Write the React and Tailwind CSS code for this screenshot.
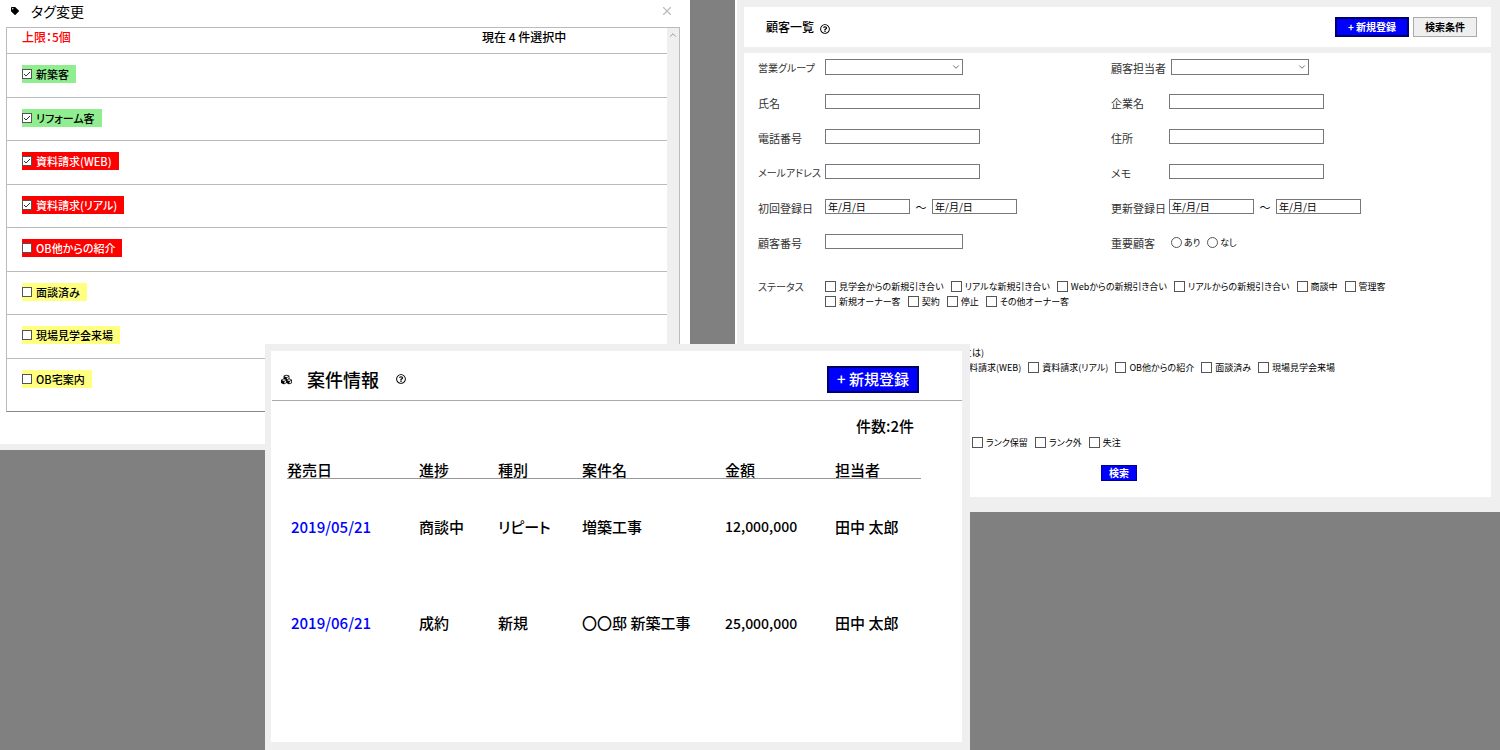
import { FaTag, FaCubes, FaRegQuestionCircle } from 'react-icons/fa';
import { ChevronDown, ChevronUp, X } from 'lucide-react';

const tags = [
  { name: '新築客', style: 'bg-[#90ee90] text-black', checked: true },
  { name: 'リフォーム客', style: 'bg-[#90ee90] text-black', checked: true },
  { name: '資料請求(WEB)', style: 'bg-[#ff0000] text-white', checked: true },
  { name: '資料請求(リアル)', style: 'bg-[#ff0000] text-white', checked: true },
  { name: 'OB他からの紹介', style: 'bg-[#ff0000] text-white', checked: false },
  { name: '面談済み', style: 'bg-[#ffff80] text-black', checked: false },
  { name: '現場見学会来場', style: 'bg-[#ffff80] text-black', checked: false },
  { name: 'OB宅案内', style: 'bg-[#ffff80] text-black', checked: false }
];

const statusRows = [
  ['見学会からの新規引き合い', 'リアルな新規引き合い', 'Webからの新規引き合い', 'リアルからの新規引き合い', '商談中', '管理客'],
  ['新規オーナー客', '契約', '停止', 'その他オーナー客']
];

const searchTags = ['資料請求(WEB)', '資料請求(リアル)', 'OB他からの紹介', '面談済み', '現場見学会来場'];

const ranks = ['ランク保留', 'ランク外', '失注'];

const projects = [
  { date: '2019/05/21', progress: '商談中', type: 'リピート', name: '増築工事', amount: '12,000,000', staff: '田中 太郎' },
  { date: '2019/06/21', progress: '成約', type: '新規', name: '〇〇邸 新築工事', amount: '25,000,000', staff: '田中 太郎' }
];

const TagRow = ({ tag }) => (
  <li className="flex items-center border-b border-[#bbb] last:border-b-0 pl-[15px] pb-[2px]">
    <label className={`flex items-center h-[18px] pr-[7px] text-[11px] leading-4 font-medium ${tag.style}`}>
      <span className="relative flex mr-1">
        <input
          type="checkbox"
          defaultChecked={tag.checked}
          className="peer appearance-none size-[10px] bg-white border border-[#555]"
        />
        <svg
          viewBox="0 0 10 10"
          className="hidden peer-checked:block absolute inset-0 size-[10px] pointer-events-none"
          fill="none"
          stroke="#333"
        >
          <path d="M2 5 L4 7 L8 3" />
        </svg>
      </span>
      {tag.name}
    </label>
  </li>
);

const TagWindow = () => (
  <section className="w-[46%] bg-white border-b-[6px] border-[#efefef]">
    <header className="flex items-center h-[27px] pl-[11px] pr-4 pb-[5px]">
      <FaTag className="size-2" />
      <h2 className="ml-3 text-[14px] leading-5">タグ変更</h2>
      <button type="button" aria-label="閉じる" className="ml-auto text-[#bbb]">
        <X className="size-[14px]" />
      </button>
    </header>

    <div className="flex ml-[6px] mr-[10px] mb-8 border border-[#bbb] border-b-[#888]">
      <div className="flex-1 pb-[9px]">
        <div className="flex h-[26px] border-b border-[#bbb] pl-[15px] text-[12px] leading-[18px] font-medium">
          <span className="w-[460px] text-[#ff0000]">上限：5個</span>
          <span>現在 4 件選択中</span>
        </div>
        <ul className="grid grid-rows-8 h-[348px]">
          {tags.map((tag) => (
            <TagRow key={tag.name} tag={tag} />
          ))}
        </ul>
      </div>
      <div className="w-3 bg-[#efefef] flex justify-center pt-[2px]">
        <ChevronUp className="size-[10px] text-[#888]" />
      </div>
    </div>
  </section>
);

const Field = ({ label, id, labelSize = 'text-[11px]', children }) => (
  <div className="flex items-center h-[35px]">
    <label
      htmlFor={id}
      className={`w-[67px] group-last:w-[58px] shrink-0 leading-4 whitespace-nowrap text-[#333] ${labelSize}`}
    >
      {label}
    </label>
    {children}
  </div>
);

const TextField = ({ label, id, labelSize, size = 'w-[155px]' }) => (
  <Field label={label} id={id} labelSize={labelSize}>
    <input id={id} type="text" className={`${size} h-[15px] mb-[2px] border border-[#777]`} />
  </Field>
);

const SelectField = ({ label, id, labelSize }) => (
  <Field label={label} id={id} labelSize={labelSize}>
    <div className="relative flex mb-[2px] group-last:ml-[2px]">
      <select id={id} className="appearance-none w-[138px] h-4 bg-white border border-[#777]">
        <option></option>
      </select>
      <ChevronDown className="absolute right-[2px] top-[3px] size-[10px] text-[#555] pointer-events-none" />
    </div>
  </Field>
);

const DateField = ({ label, id }) => (
  <Field label={label} id={id}>
    <div className="flex items-center mb-[2px]">
      <input
        id={id}
        type="text"
        placeholder="年/月/日"
        className="w-[85px] h-[15px] pl-[2px] text-[10px] leading-[13px] border border-[#777] placeholder:text-black"
      />
      <span className="w-[22px] text-center text-[11px] leading-4">～</span>
      <input
        type="text"
        aria-label={`${label} 終了`}
        placeholder="年/月/日"
        className="w-[85px] h-[15px] pl-[2px] text-[10px] leading-[13px] border border-[#777] placeholder:text-black"
      />
    </div>
  </Field>
);

const Option = ({ name }) => (
  <label className="flex items-center gap-[3px] text-[9px] leading-[15px] whitespace-nowrap">
    <input type="checkbox" className="appearance-none size-[11px] bg-white border border-[#555]" />
    {name}
  </label>
);

const CustomerWindow = () => (
  <section className="w-[51%] bg-[#efefef] border-l-2 border-white pl-[7px] pr-[9px] pt-[7px] pb-[15px]">
    <header className="flex items-center h-10 bg-white pl-[22px] pr-[14px]">
      <h2 className="text-[12px] leading-5 font-medium">顧客一覧</h2>
      <FaRegQuestionCircle className="ml-[6px] mt-1 size-[10px]" />
      <button
        type="button"
        className="ml-auto w-[74px] h-5 bg-[#0000ff] border-2 border-[#000066] text-white text-[10px] leading-4 font-bold"
      >
        + 新規登録
      </button>
      <button
        type="button"
        className="ml-1 w-16 h-5 bg-[#efefef] border border-[#aaa] text-[10px] leading-4 font-bold"
      >
        検索条件
      </button>
    </header>

    <form className="flow-root mt-[6px] bg-white pl-[14px] pb-4">
      <div className="flex -mt-[3px]">
        <div className="group w-[353px]">
          <SelectField label="営業グループ" id="group" labelSize="text-[10px]" />
          <TextField label="氏名" id="name" />
          <TextField label="電話番号" id="tel" />
          <TextField label="メールアドレス" id="mail" labelSize="text-[10px]" />
          <DateField label="初回登録日" id="first-date" />
          <TextField label="顧客番号" id="number" size="w-[138px]" />
        </div>
        <div className="group">
          <SelectField label="顧客担当者" id="staff" />
          <TextField label="企業名" id="company" />
          <TextField label="住所" id="address" />
          <TextField label="メモ" id="memo" />
          <DateField label="更新登録日" id="update-date" />
          <fieldset className="flex items-center h-[35px]">
            <legend className="float-left w-[60px] text-[11px] leading-4 text-[#333]">重要顧客</legend>
            {['あり', 'なし'].map((value) => (
              <label key={value} className="flex items-center gap-[2px] mr-[7px] text-[9px] leading-4">
                <input
                  type="radio"
                  name="important"
                  className="appearance-none size-[11px] rounded-full border border-[#555]"
                />
                {value}
              </label>
            ))}
          </fieldset>
        </div>
      </div>

      <div className="flex mt-[19px]">
        <span className="w-[67px] text-[10px] leading-4 text-[#333]">ステータス</span>
        <div>
          {statusRows.map((row, i) => (
            <div key={i} className="flex gap-[7px]">
              {row.map((name) => (
                <Option key={name} name={name} />
              ))}
            </div>
          ))}
        </div>
      </div>

      <p className="mt-9 pl-[206px] text-[9px] leading-[15px]">とは)</p>
      <div className="flex gap-[7px] pl-[188px]">
        {searchTags.map((name) => (
          <Option key={name} name={name} />
        ))}
      </div>
      <div className="flex gap-[7px] mt-[60px] pl-[214px]">
        {ranks.map((name) => (
          <Option key={name} name={name} />
        ))}
      </div>

      <button
        type="button"
        className="block mt-[15px] ml-[343px] w-9 h-4 bg-[#0000ff] border border-[#000099] text-white text-[10px] leading-[14px] font-bold"
      >
        検索
      </button>
    </form>
  </section>
);

const ProjectWindow = () => (
  <section className="absolute left-[265px] top-[344px] w-[47%] bg-[#efefef] pl-[6px] pr-2 pt-[7px] pb-2">
    <div className="bg-white pb-[70px]">
      <header className="flex items-center h-[50px] ml-px pl-[9px] pr-[43px] pt-[7px] border-b border-[#aaa]">
        <FaCubes className="size-[11px]" />
        <h2 className="ml-[15px] text-[18px] leading-6 font-medium">案件情報</h2>
        <FaRegQuestionCircle className="ml-[17px] size-[10px]" />
        <button
          type="button"
          className="ml-auto w-[92px] h-[27px] bg-[#0000ff] border-2 border-[#000066] text-white text-[15px] leading-5 font-medium"
        >
          + 新規登録
        </button>
      </header>

      <p className="pr-12 text-right text-[15px] leading-[50px] font-medium">件数:2件</p>

      <div className="pl-4 pr-[41px]">
        <table className="w-full table-fixed text-left text-[15px] font-medium">
          <thead>
            <tr className="h-[27px] border-b border-[#999] align-bottom leading-4">
              <th className="w-[132px] font-medium">発売日</th>
              <th className="w-[79px] font-medium">進捗</th>
              <th className="w-[84px] font-medium">種別</th>
              <th className="w-[143px] font-medium">案件名</th>
              <th className="w-[110px] font-medium">金額</th>
              <th className="font-medium">担当者</th>
            </tr>
          </thead>
          <tbody>
            {projects.map((project) => (
              <tr key={project.date} className="h-[97px]">
                <td className="pl-1">
                  <a href="#" className="text-[#0000ff]">{project.date}</a>
                </td>
                <td>{project.progress}</td>
                <td>{project.type}</td>
                <td className="whitespace-nowrap">{project.name}</td>
                <td className="text-[14px]">{project.amount}</td>
                <td>{project.staff}</td>
              </tr>
            ))}
          </tbody>
        </table>
      </div>
    </div>
  </section>
);

const App = () => {
  return (
    <div className="relative flex items-start justify-between min-h-screen bg-[#808080] text-black font-['Noto_Sans_CJK_JP',sans-serif] [font-feature-settings:'palt']">
      <TagWindow />
      <CustomerWindow />
      <ProjectWindow />
    </div>
  );
};

export default App;
